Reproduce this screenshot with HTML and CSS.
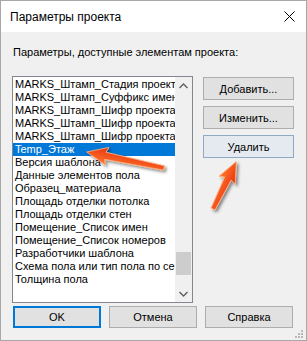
FILE: index.html
```html
<!DOCTYPE html>
<html lang="ru">
<head>
    <meta charset="UTF-8">
    <title>Параметры проекта</title>
    <link rel="stylesheet" href="styles.css">
</head>
<body>
    <div class="window">
        <div class="titlebar">
            <span class="title">Параметры проекта</span>
            <svg class="close" width="11" height="11" viewBox="0 0 11 11">
                <path d="M0.5 0.5 L10.5 10.5 M10.5 0.5 L0.5 10.5" stroke="#000" stroke-width="1" fill="none"/>
            </svg>
        </div>

        <div class="content">
            <div class="label">Параметры, доступные элементам проекта:</div>

            <div class="main">
                <div class="listbox">
                    <ul class="items">
                        <li>MARKS_Штамп_Стадия проекта</li>
                        <li>MARKS_Штамп_Суффикс имени</li>
                        <li>MARKS_Штамп_Шифр проекта</li>
                        <li>MARKS_Штамп_Шифр проекта</li>
                        <li>MARKS_Штамп_Шифр проекта</li>
                        <li class="selected">Temp_Этаж</li>
                        <li>Версия шаблона</li>
                        <li>Данные элементов пола</li>
                        <li>Образец_материала</li>
                        <li>Площадь отделки потолка</li>
                        <li>Площадь отделки стен</li>
                        <li>Помещение_Список имен</li>
                        <li>Помещение_Список номеров</li>
                        <li>Разработчики шаблона</li>
                        <li>Схема пола или тип пола по серии</li>
                        <li>Толщина пола</li>
                    </ul>
                    <div class="scrollbar">
                        <div class="scroll-btn">
                            <svg width="9" height="6" viewBox="0 0 9 6"><path d="M0.5 5 L4.5 1 L8.5 5" stroke="#606060" stroke-width="1.4" fill="none"/></svg>
                        </div>
                        <div class="track"><div class="thumb"></div></div>
                        <div class="scroll-btn">
                            <svg width="9" height="6" viewBox="0 0 9 6"><path d="M0.5 1 L4.5 5 L8.5 1" stroke="#606060" stroke-width="1.4" fill="none"/></svg>
                        </div>
                    </div>
                </div>

                <div class="side-buttons">
                    <button class="btn">Добавить...</button>
                    <button class="btn">Изменить...</button>
                    <button class="btn btn-hover">Удалить</button>
                </div>
            </div>

            <div class="footer">
                <button class="btn btn-default">OK</button>
                <button class="btn">Отмена</button>
                <button class="btn">Справка</button>
            </div>
        </div>

        <svg class="grip" width="9" height="9" viewBox="0 0 9 9">
            <rect x="7" y="1" width="2" height="2" fill="#b8b8b8"/>
            <rect x="4" y="4" width="2" height="2" fill="#b8b8b8"/>
            <rect x="7" y="4" width="2" height="2" fill="#b8b8b8"/>
            <rect x="1" y="7" width="2" height="2" fill="#b8b8b8"/>
            <rect x="4" y="7" width="2" height="2" fill="#b8b8b8"/>
            <rect x="7" y="7" width="2" height="2" fill="#b8b8b8"/>
        </svg>

        <!-- стрелки-пометки поверх окна -->
        <svg class="arrows" width="307" height="341" viewBox="0 0 307 341">
            <defs>
                <linearGradient id="arrowFill" x1="0" y1="0" x2="0" y2="1">
                    <stop offset="0" stop-color="#ff7a2e"/>
                    <stop offset="1" stop-color="#e8300e"/>
                </linearGradient>
                <filter id="shadow" x="-20%" y="-20%" width="140%" height="140%">
                    <feDropShadow dx="2" dy="2" stdDeviation="1.6" flood-color="#000" flood-opacity="0.45"/>
                </filter>
            </defs>
            <g filter="url(#shadow)" fill="url(#arrowFill)" stroke="#ffb080" stroke-width="0.8" stroke-linejoin="round">
                <polygon transform="translate(164 168) rotate(191.7)" points="0,-2.2 60,-3.6 58,-9 79,0 58,9 60,3.6 0,2.2"/>
                <polygon transform="translate(213 209) rotate(-63.9)" points="0,-2.2 34,-3.6 32,-9 53,0 32,9 34,3.6 0,2.2"/>
            </g>
        </svg>
    </div>
</body>
</html>
```

FILE: styles.css
```css
* {
    box-sizing: border-box;
}
body {
    margin: 0;
    padding: 0;
    font-family: "Liberation Sans", Arial, sans-serif;
    font-size: 11px;
    color: #000;
}
.window {
    position: relative;
    width: 307px;
    height: 341px;
    background-color: #f0f0f0;
    border: 1px solid #a8a8a8;
    overflow: hidden;
}
.titlebar {
    height: 31px;
    background-color: #fff;
    display: flex;
    align-items: center;
    justify-content: space-between;
    padding: 0 11px 0 9px;
}
.title {
    font-size: 12px;
    padding-top: 1px;
}
.close {
    display: block;
}
.content {
    padding: 14px 0 0 11px;
}
.label {
    line-height: 13px;
    height: 13px;
    margin-left: 1px;
}
.main {
    display: flex;
    margin-top: 17px;
}
.listbox {
    width: 181px;
    height: 227px;
    background-color: #fff;
    border: 1px solid #828790;
    display: flex;
}
.items {
    list-style: none;
    margin: 0;
    padding: 1px 0 0 0;
    width: 162px;
    overflow: hidden;
}
.items li {
    height: 13px;
    line-height: 13px;
    padding-left: 2px;
    white-space: nowrap;
    overflow: hidden;
}
.items li.selected {
    background-color: #0078d7;
    color: #fff;
}
.scrollbar {
    width: 17px;
    background-color: #f0f0f0;
    display: flex;
    flex-direction: column;
}
.scroll-btn {
    height: 17px;
    display: flex;
    align-items: center;
    justify-content: center;
}
.track {
    flex: 1;
    padding: 0 1px;
}
.thumb {
    margin-top: 158px;
    height: 23px;
    background-color: #cdcdcd;
}
.side-buttons {
    display: flex;
    flex-direction: column;
    gap: 6px;
    margin-left: 10px;
    padding-top: 1px;
}
.btn {
    font-family: "Liberation Sans", Arial, sans-serif;
    font-size: 11px;
    color: #000;
    background-color: #e1e1e1;
    border: 1px solid #adadad;
    padding: 0;
    width: 91px;
    height: 23px;
}
.btn-hover {
    background-color: #e5eaf0;
    border-color: #8fa8c4;
}
.footer {
    display: flex;
    gap: 8px;
    margin: 3px 0 0 1px;
}
.footer .btn {
    width: 88px;
    height: 22px;
}
.btn-default {
    border: 2px solid #0078d7;
}
.grip {
    position: absolute;
    right: 3px;
    bottom: 2px;
}
.arrows {
    position: absolute;
    left: -1px;
    top: -1px;
    pointer-events: none;
}
```
